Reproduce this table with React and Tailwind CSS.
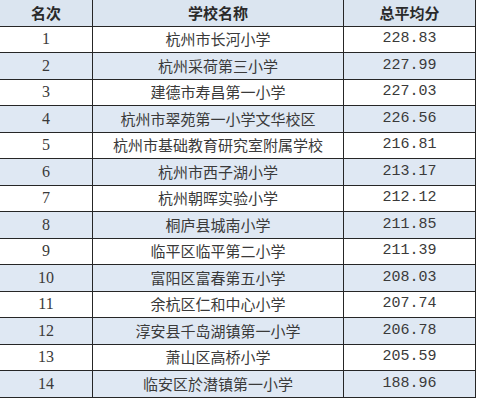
const rows = [
  [1, '杭州市长河小学', '228.83'],
  [2, '杭州采荷第三小学', '227.99'],
  [3, '建德市寿昌第一小学', '227.03'],
  [4, '杭州市翠苑第一小学文华校区', '226.56'],
  [5, '杭州市基础教育研究室附属学校', '216.81'],
  [6, '杭州市西子湖小学', '213.17'],
  [7, '杭州朝晖实验小学', '212.12'],
  [8, '桐庐县城南小学', '211.85'],
  [9, '临平区临平第二小学', '211.39'],
  [10, '富阳区富春第五小学', '208.03'],
  [11, '余杭区仁和中心小学', '207.74'],
  [12, '淳安县千岛湖镇第一小学', '206.78'],
  [13, '萧山区高桥小学', '205.59'],
  [14, '临安区於潜镇第一小学', '188.96'],
];

const serif = "font-['Liberation_Serif','Noto_Sans_CJK_SC',serif]";
const mono = "font-['Liberation_Mono','Noto_Sans_CJK_SC',monospace]";

function Row({ bg, children }) {
  return (
    <div className={`grid grid-cols-[93px_251px_131px] h-[26.5px] border-b border-[#262626] ${bg}`}>
      {children}
    </div>
  );
}

export default function App() {
  return (
    <div className="w-[478px] h-[400px] bg-white overflow-hidden text-[#3a3a3a]">
      <div className="w-[476px] border-r border-[#262626]">
        <div className="grid grid-cols-[93px_251px_131px] h-[26.5px] border-b border-[#262626] bg-[#dbe5f0] font-bold text-[15px] text-[#2a2a2a] font-['Noto_Sans_CJK_SC',sans-serif]">
          <div className="flex items-center justify-center border-r border-[#262626]">名次</div>
          <div className="flex items-center justify-center border-r border-[#262626]">学校名称</div>
          <div className="flex items-center justify-center">总平均分</div>
        </div>
        {rows.map(([rank, name, score]) => (
          <Row key={rank} bg={rank % 2 === 0 ? 'bg-[#dfe8f3]' : 'bg-white'}>
            <div className={`flex items-center justify-center border-r border-[#262626] text-[16px] ${serif}`}>{rank}</div>
            <div className="flex items-center justify-center border-r border-[#262626] text-[15px] font-['Noto_Sans_CJK_SC',sans-serif]">{name}</div>
            <div className={`flex items-center justify-center text-[15px] ${mono}`}>{score}</div>
          </Row>
        ))}
      </div>
    </div>
  );
}
